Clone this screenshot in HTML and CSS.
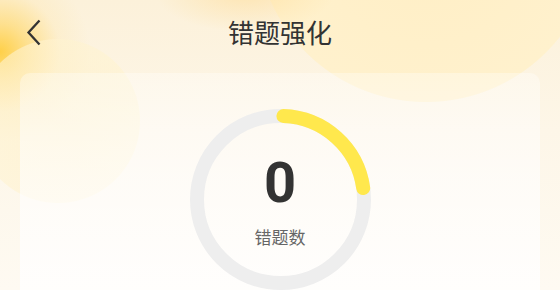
FILE: index.html
```html
<!DOCTYPE html>
<html lang="zh-CN">
<head>
<meta charset="utf-8">
<title>错题强化</title>
<link rel="stylesheet" href="styles.css">
</head>
<body>
  <header class="header">
    <button class="back" aria-label="返回">
      <svg width="16" height="30" viewBox="0 0 16 30" aria-hidden="true">
        <polyline points="13.5,1.5 2.5,13.5 13.5,25.5" fill="none" stroke="#333" stroke-width="2.3" stroke-linejoin="miter"/>
      </svg>
    </button>
    <h1 class="title">错题强化</h1>
    <span class="spacer"></span>
  </header>
  <main class="card">
    <div class="ring">
      <svg class="ring-svg" width="181" height="181" viewBox="0 0 181 181" aria-hidden="true">
        <circle cx="90.5" cy="90.5" r="83.5" fill="none" stroke="#eeeeee" stroke-width="14"/>
        <circle cx="90.5" cy="90.5" r="83.5" fill="none" stroke="#ffe84d" stroke-width="14" stroke-linecap="round" stroke-dasharray="116.6 1000" transform="rotate(-88 90.5 90.5)"/>
      </svg>
      <div class="ring-text">
        <span class="count">0</span>
        <span class="label">错题数</span>
      </div>
    </div>
  </main>
</body>
</html>
```
FILE: styles.css
```css
html, body {
  margin: 0;
  padding: 0;
}
body {
  width: 560px;
  height: 290px;
  overflow: hidden;
  font-family: "Noto Sans CJK SC", "Noto Sans", sans-serif;
  color: #333;
  background:
    radial-gradient(circle 82px at 58px 121px, rgba(255, 241, 200, 0.6) 0, rgba(255, 243, 208, 0.6) 81.5px, rgba(255, 243, 208, 0) 82.5px),
    radial-gradient(circle 90px at 0px 52px, rgba(255, 204, 56, 0.9) 0, rgba(255, 212, 90, 0.6) 28px, rgba(255, 226, 150, 0.22) 60px, rgba(255, 230, 170, 0) 90px),
    radial-gradient(ellipse 90px 40px at 245px -8px, rgba(255, 214, 130, 0.45), rgba(255, 214, 130, 0)),
    radial-gradient(circle 170px at 426px -68px, #ffeec4 0, #fff1cd 169.5px, rgba(255, 241, 205, 0) 170.5px),
    linear-gradient(180deg, #fcf1da 0, #fdf6e8 45%, #fefaf2 100%);
}
.header {
  height: 63px;
  display: grid;
  grid-template-columns: 1fr auto 1fr;
  align-items: center;
}
.back {
  justify-self: start;
  margin-left: 26px;
  margin-top: 4px;
  padding: 0;
  border: 0;
  background: none;
  width: 16px;
  height: 30px;
  display: flex;
}
.title {
  margin: 0;
  font-size: 26px;
  font-weight: 400;
  line-height: 26px;
  color: #333;
  letter-spacing: 0;
}
.card {
  margin: 10px 20px 0;
  height: 217px;
  border-radius: 10px 10px 0 0;
  background: linear-gradient(180deg, rgba(255, 255, 255, 0.32) 0, rgba(255, 255, 255, 0.55) 40%, rgba(255, 255, 255, 0.8) 100%);
  padding-top: 36px;
  box-sizing: border-box;
  display: flex;
  justify-content: center;
}
.ring {
  width: 181px;
  height: 181px;
  display: grid;
}
.ring > * {
  grid-area: 1 / 1;
}
.ring-text {
  display: flex;
  flex-direction: column;
  align-items: center;
  justify-content: center;
}
.count {
  font-family: Roboto, "Liberation Sans", sans-serif;
  font-weight: 700;
  font-size: 56px;
  line-height: 56px;
  color: #333;
  margin-bottom: 17px;
}
.label {
  font-size: 17px;
  line-height: 17px;
  color: #666;
}
```
